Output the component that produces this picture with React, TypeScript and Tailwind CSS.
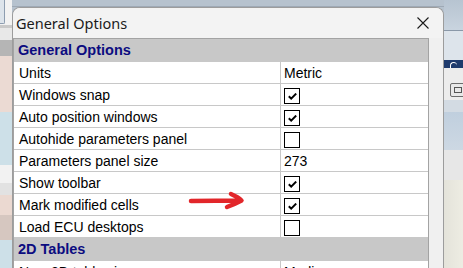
import React from "react";

const Check = () => (
  <svg width="9" height="7" viewBox="0 0 9 7" className="block">
    <path d="M0.8 3.2 L3.2 5.6 L8.2 0.6" fill="none" stroke="#000" strokeWidth="2" />
  </svg>
);

type Row =
  | { kind: "section"; label: string }
  | { kind: "text"; label: string; value: string }
  | { kind: "check"; label: string; checked: boolean };

const rows: Row[] = [
  { kind: "section", label: "General Options" },
  { kind: "text", label: "Units", value: "Metric" },
  { kind: "check", label: "Windows snap", checked: true },
  { kind: "check", label: "Auto position windows", checked: true },
  { kind: "check", label: "Autohide parameters panel", checked: false },
  { kind: "text", label: "Parameters panel size", value: "273" },
  { kind: "check", label: "Show toolbar", checked: true },
  { kind: "check", label: "Mark modified cells", checked: true },
  { kind: "check", label: "Load ECU desktops", checked: false },
  { kind: "section", label: "2D Tables" },
  { kind: "text", label: "New 2D table view", value: "Medium" },
];

export default function App() {
  return (
    <div
      className="relative flex w-[463px] h-[268px] overflow-hidden"
      style={{ fontFamily: "'Liberation Sans', Arial, sans-serif" }}
    >
      {/* left background strip */}
      <div className="flex flex-col w-[12px] shrink-0">
        <div className="h-[25px] bg-[#f2f2f2] flex">
          <div className="w-[5px] h-[24px] bg-[#dde4eb] border-r border-b border-[#8d9db0] rounded-br-[2px]" />
        </div>
        <div className="h-[3px] bg-[#c9c9c9]" />
        <div className="h-[12px] bg-[#e8e8e8]" />
        <div className="h-[16px] bg-[#b5b5b5]" />
        <div className="h-[56px] bg-[#ebdad3]" />
        <div className="h-[53px] bg-[#cde0e8]" />
        <div className="h-[18px] bg-[#f2f2f2]" />
        <div className="h-[12px] bg-[#e2e2e2]" />
        <div className="h-[20px] bg-[#ebd9d1]" />
        <div className="h-[25px] bg-[#d6c7c0]" />
        <div className="flex-1 bg-[#cde0e8]" />
      </div>

      {/* middle: dialog */}
      <div className="flex flex-col w-[432px] shrink-0 bg-[#b6c2ce]">
        <div className="h-[7px] shrink-0 bg-[#b6c2ce] border-b border-[#9ea9b5] box-border" />
        <div className="flex-1 flex flex-col rounded-t-[8px] border-x border-t border-[#9c9c9c] bg-[#f0f0f0] overflow-hidden">
          {/* title bar */}
          <div className="h-[30px] shrink-0 flex items-center justify-between bg-[#f3f3f3] pl-[3px] pr-[14px]">
            <span
              className="text-[14.5px] leading-[30px] text-[#1b1b1b]"
              style={{ fontFamily: "'Noto Sans', 'Liberation Sans', sans-serif" }}
            >
              General Options
            </span>
            <svg width="12" height="12" viewBox="0 0 12 12" className="block">
              <path d="M0.5 0.5 L11.5 11.5 M11.5 0.5 L0.5 11.5" stroke="#1b1b1b" strokeWidth="1.1" />
            </svg>
          </div>
          {/* grid */}
          <div className="flex flex-1">
            <div className="w-[416px] shrink-0 border-t border-x border-[#a3a3a3] bg-white flex flex-col">
              {rows.map((r, i) =>
                r.kind === "section" ? (
                  <div
                    key={i}
                    className="h-[23px] shrink-0 bg-[#c8c8c8] pl-[4px] text-[14.5px] leading-[23px] font-bold text-[#0c0c80]"
                  >
                    {r.label}
                  </div>
                ) : (
                  <div key={i} className="h-[22px] shrink-0 flex border-b border-[#c8c8c8] text-[14px] leading-[21px] text-black">
                    <div className="w-[266px] shrink-0 pl-[5px] pt-[1px] whitespace-nowrap overflow-hidden">{r.label}</div>
                    <div className="flex-1 border-l border-[#c8c8c8] pl-[3px]">
                      {r.kind === "text" ? (
                        <div className="pt-[1px]">{r.value}</div>
                      ) : (
                        <div className="pt-[4px]">
                          <div className="w-[16px] h-[16px] border border-black bg-white flex items-center justify-center">
                            {r.checked && <Check />}
                          </div>
                        </div>
                      )}
                    </div>
                  </div>
                )
              )}
            </div>
            <div className="flex-1" />
          </div>
        </div>
      </div>

      {/* right background strip */}
      <div className="flex flex-col flex-1">
        <div className="h-[30px] bg-gradient-to-b from-[#b7c4d1] to-[#c9d4df]" />
        <div className="h-px bg-[#8a98a8]" />
        <div className="h-[29px] bg-[#dde4eb]" />
        <div className="h-[8px] bg-[#1f3b6d] flex items-end pl-[6px] overflow-hidden">
          <div className="w-[7px] h-[6px] rounded-t-full border-t-[1.5px] border-l-[1.5px] border-white" />
        </div>
        <div className="h-[32px] bg-[#ececec] pt-[15px] pl-[6px]">
          <div className="w-[20px] h-[14px] border border-[#6d6d6d] rounded-[2px] bg-[#e8e8e8] flex items-center pl-[3px]">
            <div className="w-[8px] h-[6px] border border-[#555]" />
          </div>
        </div>
        <div className="h-[12px] bg-[#d3dbe3]" />
        <div className="h-[38px] bg-gradient-to-b from-[#c0cfde] to-[#cdd8e3]" />
        <div className="h-[30px] bg-[#e7e7e7]" />
        <div className="flex-1 bg-gradient-to-r from-[#e4e3da] to-[#f1f0e6]" />
      </div>

      {/* red annotation arrow */}
      <svg
        className="absolute left-[186px] top-[190px]"
        width="60"
        height="22"
        viewBox="0 0 60 22"
      >
        <path
          d="M5 11 L55 10.5 M45 4 Q52 7 55.5 10.5 Q50 13.5 41 17"
          fill="none"
          stroke="#e2262a"
          strokeWidth="4.5"
          strokeLinecap="round"
          strokeLinejoin="round"
        />
      </svg>
    </div>
  );
}
